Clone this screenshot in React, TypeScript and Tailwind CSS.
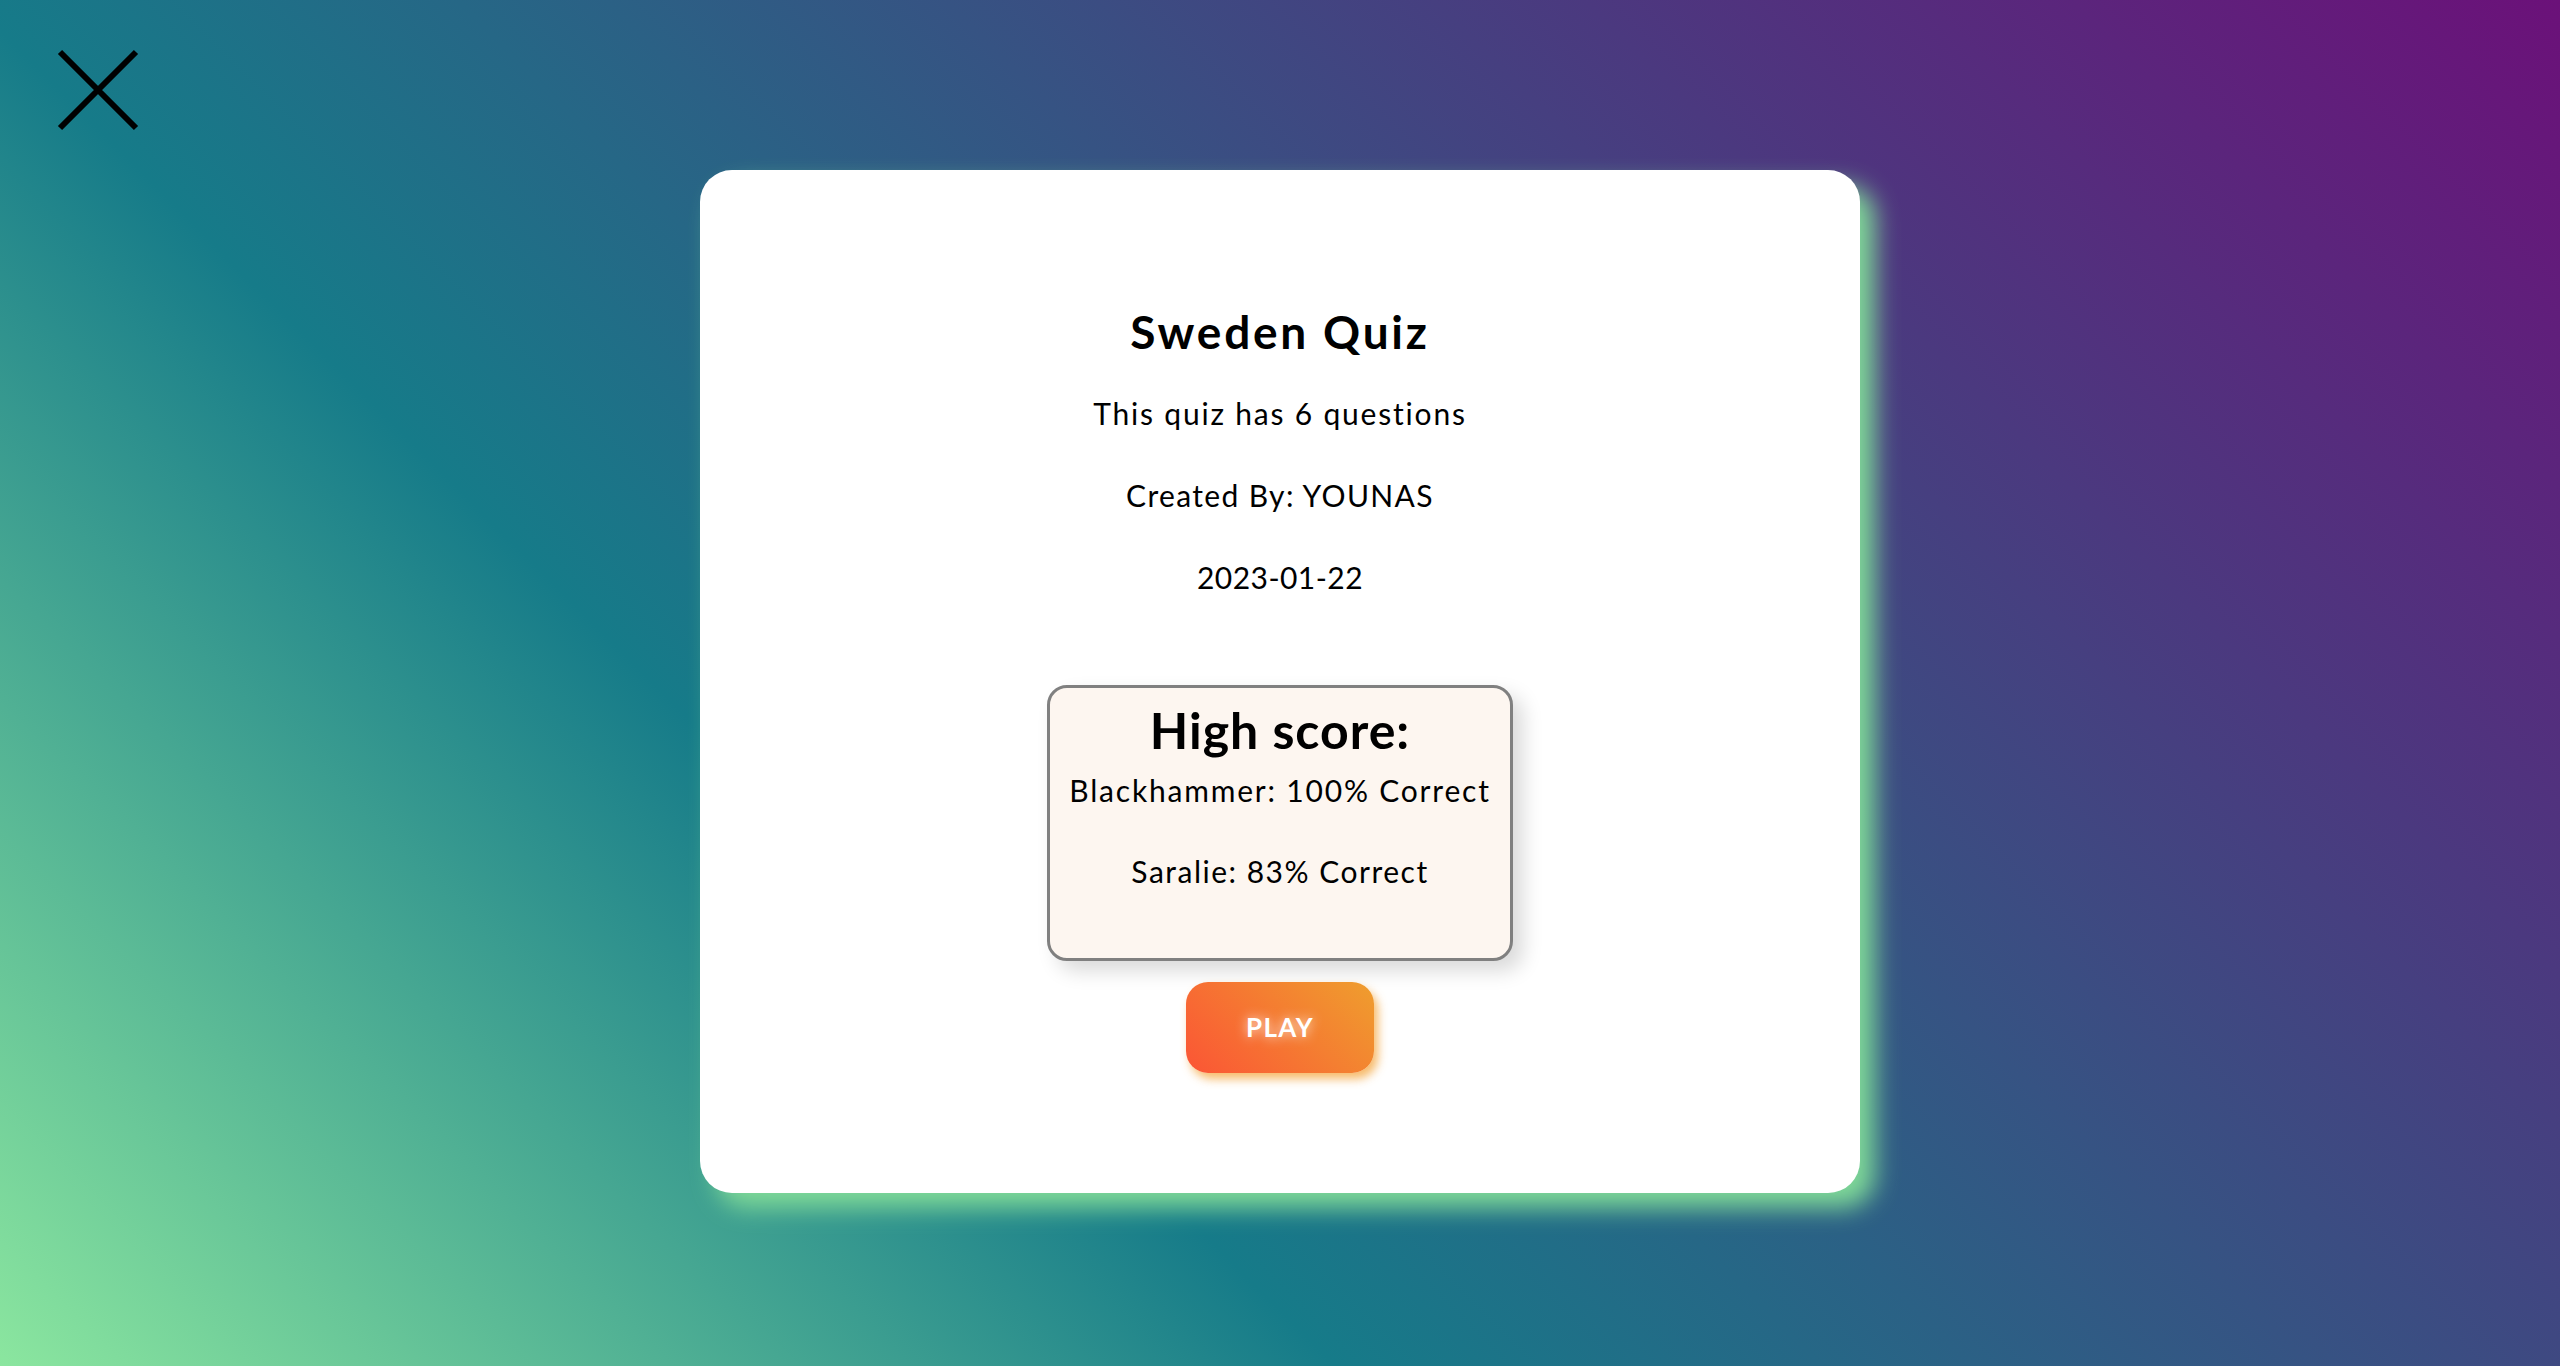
import React from "react";

const scores = [
  { name: "Blackhammer", pct: 100, track: "tracking-[0.06em]" },
  { name: "Saralie", pct: 83, track: "tracking-[0.05em]" },
];

function CloseIcon() {
  return (
    <svg viewBox="0 0 84 84" className="w-[84px] h-[84px]" fill="none">
      <path d="M4 4 L80 80 M80 4 L4 80" stroke="#000" strokeWidth="6" />
    </svg>
  );
}

export default function App() {
  return (
    <div
      className="relative min-h-screen w-full flex items-center justify-center pb-[3px] bg-[linear-gradient(45deg,#8be69f_0%,#167b89_34%,#6b1179_100%)] text-black"
      style={{ fontFamily: "Lato, 'Noto Sans', sans-serif" }}
    >
      <button className="absolute left-[56px] top-[48px]">
        <CloseIcon />
      </button>

      <div className="w-[1160px] bg-white rounded-[32px] shadow-[15px_15px_25px_#80da98] flex flex-col items-center pt-[134px] pb-[120px]">
        <h1 className="text-[46px] leading-[56px] font-bold tracking-[0.06em]">Sweden Quiz</h1>
        <p className="mt-[33px] text-[30px] leading-[40px] tracking-[0.06em]">This quiz has 6 questions</p>
        <p className="mt-[42px] text-[30px] leading-[40px] tracking-[0.045em]">Created By: YOUNAS</p>
        <p className="mt-[42px] text-[30px] leading-[40px] tracking-[0.015em]">2023-01-22</p>

        <div className="mt-[88px] w-[466px] h-[276px] bg-[#fdf6f0] border-[3px] border-[#808080] rounded-[20px] shadow-[10px_10px_20px_rgba(0,0,0,0.15)] flex flex-col items-center pt-[12px]">
          <h2 className="text-[50px] leading-[60px] font-bold tracking-[0.02em]">High score:</h2>
          {scores.map((s, i) => (
            <p key={s.name} className={`text-[30px] leading-[40px] ${s.track} ${i === 0 ? "mt-[10px]" : "mt-[41px]"}`}>
              {s.name}: {s.pct}% Correct
            </p>
          ))}
        </div>

        <button className="mt-[21px] w-[188px] h-[91px] rounded-[22px] bg-[linear-gradient(45deg,#fb5535,#ef9e2e)] shadow-[4px_6px_10px_rgba(245,170,70,0.8)] text-white font-bold text-[26px] tracking-[0.05em] [text-shadow:0_0_12px_rgba(255,255,255,0.9)]">
          PLAY
        </button>
      </div>
    </div>
  );
}
